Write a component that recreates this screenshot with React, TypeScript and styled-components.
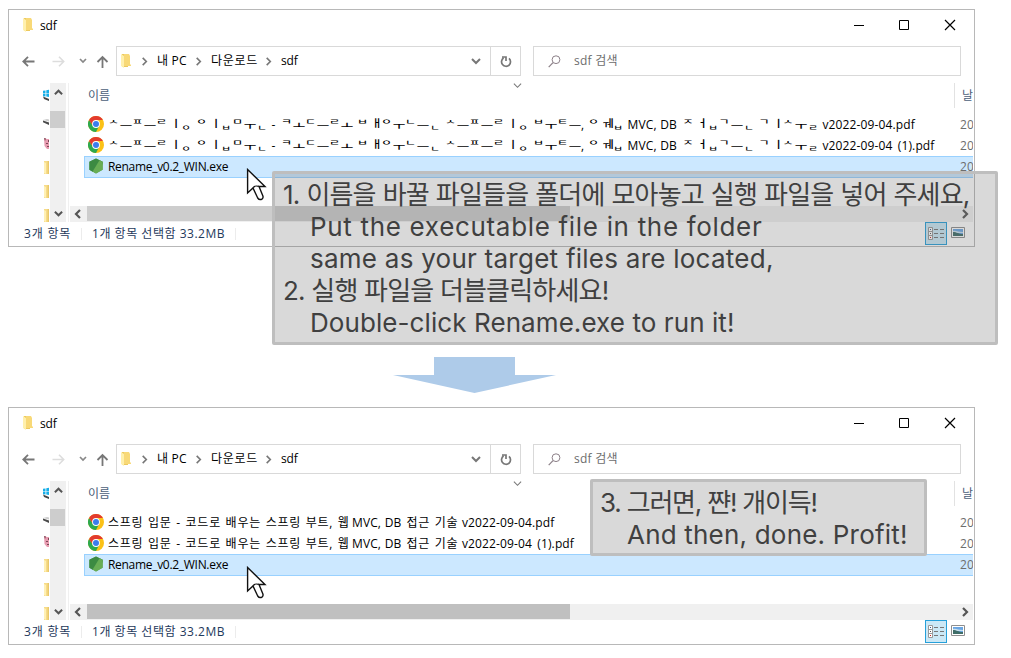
import React from "react";
import styled, { createGlobalStyle } from "styled-components";

const Global = createGlobalStyle`
  *{box-sizing:border-box}
  body{margin:0;background:#fff;overflow:hidden}
`;

const UI = `"Open Sans","Noto Sans CJK KR",sans-serif`;

const Page = styled.main`
  position:relative;width:1011px;height:658px;padding:9px 0 0 8px;
  font-family:${UI};font-size:12px;line-height:20px;color:#000;overflow:hidden;
`;
const Win = styled.section`
  width:967px;height:238px;border:1px solid #b8b8b8;background:#fff;
  display:flex;flex-direction:column;
`;
const TitleBar = styled.header`
  height:36px;flex:none;display:flex;align-items:flex-start;padding:7px 18px 0 14px;
`;
const Title = styled.span`margin:-1px auto 0 6px;line-height:20px;letter-spacing:-.2px;`;
const Controls = styled.div`display:flex;gap:34px;padding-top:2px;svg{display:block}`;
const NavBar = styled.div`
  height:30px;flex:none;display:flex;align-items:center;padding-left:13px;
`;
const NavArrows = styled.div`width:94px;display:flex;align-items:center;`;
const Address = styled.div`
  width:405px;height:30px;border:1px solid #d9d9d9;display:flex;align-items:center;padding-left:4px;
  & > svg:first-child{margin-top:-2px}
`;
const Crumbs = styled.div`
  flex:1;display:flex;align-items:center;margin-left:8px;height:28px;
  svg{flex:none}
`;
const Crumb = styled.span<{ $w: number; $ls?: number }>`
  width:${p => p.$w}px;margin-left:8px;white-space:nowrap;letter-spacing:${p => p.$ls ?? 0}px;
`;
const Refresh = styled.div`
  width:30px;height:28px;border-left:1px solid #d9d9d9;display:flex;align-items:center;justify-content:center;
`;
const Search = styled.div`
  width:428px;height:30px;margin-left:12px;border:1px solid #d9d9d9;display:flex;align-items:center;
  padding-left:14px;color:#6d6d6d;span{margin-left:13px;}
`;
const Body = styled.div`height:146px;flex:none;display:flex;position:relative;padding-top:7px;`;
const Expand = styled.div`position:absolute;left:504px;top:5px;line-height:0;`;
const Tree = styled.div`
  width:41px;height:139px;padding-left:34px;overflow:hidden;display:flex;flex-direction:column;
`;
const TreeItem = styled.div`height:24px;width:7px;flex:none;display:flex;align-items:center;overflow:hidden;svg{flex:none}`;
const VScroll = styled.div`
  width:16px;height:139px;background:#f0f0f0;display:flex;flex-direction:column;
  justify-content:space-between;align-items:center;padding:5px 0 4px;margin-right:2px;
`;
const VThumb = styled.div`width:15px;height:17px;background:#cdcdcd;margin:14px auto auto 0;`;
const Files = styled.div`
  flex:1;min-width:0;border-left:1px solid #f0f0f0;display:flex;flex-direction:column;margin-right:1px;
`;
const Columns = styled.div`height:26px;display:flex;padding-left:19px;color:#4c607a;`;
const NameCol = styled.span`width:866px;line-height:26px;`;
const DateCol = styled.span`
  height:25px;border-left:1px solid #e2e2e2;padding-left:7px;line-height:26px;overflow:hidden;white-space:nowrap;width:19px;
`;
const Rows = styled.div`padding:5px 0 0 15px;height:97px;`;
const Row = styled.div<{ $sel?: boolean }>`
  height:${p => (p.$sel ? 22 : 21)}px;display:flex;align-items:center;padding-left:3px;
  border:1px solid ${p => (p.$sel ? "#99d1ff" : "transparent")};border-right:0;
  background:${p => (p.$sel ? "#cce8ff" : "transparent")};
  svg{flex:none;margin-top:${p => (p.$sel ? -2 : -2)}px}
`;
const FileName = styled.div`width:853px;margin-left:4px;display:flex;white-space:pre;`;
const Run = styled.span<{ $ls?: number; $w?: number; $ws?: number }>`
  flex:none;letter-spacing:${p => p.$ls ?? 0}px;word-spacing:${p => p.$ws ?? 0}px;
  width:${p => (p.$w ? `${p.$w}px` : "auto")};
`;
const DateCell = styled.span`color:#6d6d6d;width:13px;overflow:hidden;`;
const HScroll = styled.div`
  height:16px;margin-left:1px;background:#f0f0f0;display:flex;align-items:center;
`;
const HThumb = styled.div<{ $c: string }>`width:483px;height:15px;background:${p => p.$c};margin:0 auto 1px 5px;`;
const Status = styled.footer`
  flex:1;display:flex;align-items:center;padding-left:15px;color:#1e395b;
`;
const Count = styled.span<{ $w: number; $ls: number }>`
  width:${p => p.$w}px;letter-spacing:${p => p.$ls}px;white-space:nowrap;
`;
const Sep = styled.i`width:1px;height:12px;background:#ececec;`;
const ViewButton = styled.div`
  width:22px;height:23px;margin:-1px 0 0 auto;border:1px solid #26a0da;background:#cbe8f6;
  display:flex;align-items:center;justify-content:center;
`;
const Thumbs = styled.div`margin:-3px 9px 0 4px;line-height:0;`;
const Pointer = styled.svg`position:absolute;left:246px;`;

const Jamo = styled.span<{ $k: "l" | "v" | "r" | "t" }>`
  display:block;flex:none;width:12px;height:20px;line-height:20px;font-weight:500;
  transform:${p =>
    p.$k === "l" ? "translate(0,-2px) scale(1,.54)" :
    p.$k === "t" ? "translate(.5px,4px) scale(.88,.54)" :
    p.$k === "r" ? "translate(2.5px,-1px) scale(1,.85)" : "translate(.5px,.7px) scale(1.14,.8)"};
  transform-origin:6px ${p => (p.$k === "l" || p.$k === "t" ? 7 : 10)}px;
`;

const Down = styled.svg`display:block;margin:110px 0 14px 385px;`;
const Note = styled.div<{ $solid?: boolean }>`
  position:absolute;border:3px solid #bebebe;border-radius:2px;background-clip:padding-box;
  background-color:${p => (p.$solid ? "#d9d9d9" : "rgba(109,109,109,.26)")};
  font-family:Inter,"Noto Sans CJK KR",sans-serif;font-weight:400;font-size:26px;line-height:32px;color:#404040;
  white-space:pre;
`;
const FirstNote = styled(Note)`left:272px;top:171px;width:726px;height:174px;padding:5px 0 0 8px;`;
const LastNote = styled(Note)`left:590px;top:479px;width:337px;height:77px;padding:5px 0 0 7px;`;
const Line = styled.div<{ $ls?: number; $ws?: number; $in?: number }>`
  height:32px;letter-spacing:${p => p.$ls ?? 0}px;word-spacing:${p => p.$ws ?? 0}px;padding-left:${p => p.$in ?? 0}px;
`;

const Folder = () => (
  <svg width="11" height="15" viewBox="0 0 11 15">
    <path d="M1 1h6v13H1z" fill="#ecc95f" />
    <path d="M3 1h5l1 2v8l1 1v1H3z" fill="#f8d978" />
    <path d="M0 1l3 2v12l-3-2z" fill="#fff0ad" />
  </svg>
);
const Chev = ({ d, s = 9, c = "#666", w = 1.8 }: { d: "r" | "d" | "u"; s?: number; c?: string; w?: number }) => {
  const p = { r: "M3 1l4 4-4 4", d: "M1 3l4 4 4-4", u: "M1 7l4-4 4 4" }[d];
  return <svg width={s} height={s} viewBox="0 0 10 10"><path d={p} fill="none" stroke={c} strokeWidth={w} /></svg>;
};
const Arrow = ({ c, up }: { c: string; up?: boolean }) => (
  <svg width="13" height="13" viewBox="0 0 13 13">
    <path d={up ? "M6.5 13V2M1.5 7l5-5 5 5" : "M12.5 6.5H1.5M6 1.8L1.3 6.5 6 11.2"} fill="none" stroke={c} strokeWidth="1.8" />
  </svg>
);
const Chrome = () => (
  <svg width="16" height="16" viewBox="0 0 16 16">
    <circle cx="8" cy="8" r="8" fill="#fbc116" />
    <path d="M1.07 4A8 8 0 0 0 8 16l3.2-6.2L8 8 4.9 9.8z" fill="#2da94f" />
    <path d="M1.07 4A8 8 0 0 1 14.93 4H8L4.9 9.8z" fill="#e33b2e" />
    <circle cx="8" cy="8" r="3.9" fill="#fff" />
    <circle cx="8" cy="8" r="3" fill="#3b7ded" />
  </svg>
);
const Hexagon = () => (
  <svg width="16" height="16" viewBox="0 0 16 16">
    <path d="M8 0.4l6.6 3.4v8L8 15.6 1.4 11.8v-8z" fill="#4f9a47" />
    <path d="M8 .4l6.6 3.4v2.5L4.6 13.7 1.4 11.8v-8z" fill="#3c8a42" />
    <path d="M11.5 2.2l3.1 1.6v8L8 15.6l-3.4-2z" fill="#68ad55" />
  </svg>
);

const Places = () => (
  <Tree>
    <TreeItem>
      <svg width="8" height="12" viewBox="0 0 8 12">
        <path d="M0 1.8l2.5-.4v3H0zM3.3 1.2L6 .8v3.6H3.3zM0 5h2.5v2.6L0 7.3zM3.3 5H6v3l-2.7-.4z" fill="#16aee8" />
        <path d="M0 7.4l6 2.6v2L1 10z" fill="#444" />
      </svg>
    </TreeItem>
    <TreeItem>
      <svg width="8" height="12" viewBox="0 0 8 12">
        <path d="M0 7l4-1 2 .6v2z" fill="#ccc" /><path d="M0 7.4l6 2.2V12L0 9.2z" fill="#4b4b4b" />
      </svg>
    </TreeItem>
    <TreeItem>
      <svg width="8" height="13" viewBox="0 0 8 13">
        <path d="M1 1l3 1 2 0v10H4L1.5 9z" fill="#e79bb0" /><path d="M1 1l2 .5L2 4zM3 6h2v1H3zM4 9h2v1H4zM5 3h1v2H5z" fill="#7d4856" />
      </svg>
    </TreeItem>
    {[0, 1, 2].map(i => (
      <TreeItem key={i}>
        <svg width="8" height="13" viewBox="0 0 8 13"><path d="M1 0h5v13H1z" fill="#f7dc89" /><path d="M1 1l2 1v11l-2-1z" fill="#fff0b5" /><path d="M4.6 0H6v13H4.6z" fill="#e9c86c" /></svg>
      </TreeItem>
    ))}
  </Tree>
);

type Kind = "l" | "v" | "r" | "t";
type Piece = { jamo: string; kinds: string } | { text: string; w: number };
const SPLIT: Piece[] = [
  { jamo: "ㅅㅡㅍㅡㄹㅣㅇ", kinds: "lvlvlrt" }, { text: " ", w: 4 },
  { jamo: "ㅇㅣㅂㅁㅜㄴ", kinds: "lrtlvt" }, { text: " - ", w: 13 },
  { jamo: "ㅋㅗㄷㅡㄹㅗ", kinds: "lvlvlv" }, { text: " ", w: 4 },
  { jamo: "ㅂㅐㅇㅜㄴㅡㄴ", kinds: "lrlvlvt" }, { text: " ", w: 4 },
  { jamo: "ㅅㅡㅍㅡㄹㅣㅇ", kinds: "lvlvlrt" }, { text: " ", w: 4 },
  { jamo: "ㅂㅜㅌㅡ", kinds: "lvlv" }, { text: ", ", w: 7 },
  { jamo: "ㅇㅞㅂ", kinds: "lrt" }, { text: " MVC, DB ", w: 58.5 },
  { jamo: "ㅈㅓㅂㄱㅡㄴ", kinds: "lrtlvt" }, { text: " ", w: 4 },
  { jamo: "ㄱㅣㅅㅜㄹ", kinds: "lrlvt" }, { text: " ", w: 4 },
];
const SplitName = ({ tail }: { tail: string }) => (
  <FileName>
    {SPLIT.map((s, i) => "text" in s
      ? <Run key={i} $w={s.w} $ls={0.1} $ws={0.4}>{s.text}</Run>
      : [...s.jamo].map((ch, j) => <Jamo key={i + "-" + j} $k={s.kinds[j] as Kind}>{ch}</Jamo>))}
    <Run $ls={0.13} $ws={2}>{tail}</Run>
  </FileName>
);
const JoinedName = ({ tail }: { tail: string }) => (
  <FileName>
    <Run $ls={0.75} $ws={0.8} $w={244}>스프링 입문 - 코드로 배우는 스프링 부트, 웹 </Run>
    <Run $ls={0.1} $ws={0.4} $w={54.5}>MVC, DB </Run>
    <Run $ls={0.75} $ws={0.8} $w={55.5}>접근 기술 </Run>
    <Run $ls={0.13} $ws={2}>{tail}</Run>
  </FileName>
);

const Explorer = ({ split }: { split?: boolean }) => {
  const Name = split ? SplitName : JoinedName;
  return (
    <Win>
      <TitleBar>
        <Folder /><Title>sdf</Title>
        <Controls>
          <svg width="11" height="12"><path d="M0 6.5h10" stroke="#000" /></svg>
          <svg width="11" height="12"><path d="M.5 1.5h9v9h-9z" fill="none" stroke="#000" /></svg>
          <svg width="12" height="12"><path d="M1 1l10 10M11 1L1 11" fill="none" stroke="#000" strokeWidth="1.2" /></svg>
        </Controls>
      </TitleBar>
      <NavBar>
        <NavArrows>
          <Arrow c="#777" />
          <svg width="13" height="13" viewBox="0 0 13 13" style={{ marginLeft: 17 }}><path d="M.5 6.5h11M7 1.8l4.7 4.7L7 11.2" fill="none" stroke="#ddd" strokeWidth="1.6" /></svg>
          <svg width="8" height="6" viewBox="0 0 8 6" style={{ marginLeft: 14, marginRight: 9 }}><path d="M1 1l3 3 3-3" fill="none" stroke="#888" strokeWidth="1.7" /></svg>
          <Arrow c="#777" up />
        </NavArrows>
        <Address>
          <Folder />
          <Crumbs>
            <Chev d="r" c="#777" /><Crumb $w={37} $ls={0.2}>내 PC</Crumb>
            <Chev d="r" c="#777" /><Crumb $w={53} $ls={0.7}>다운로드</Crumb>
            <Chev d="r" c="#777" /><Crumb $w={30} $ls={-0.2}>sdf</Crumb>
          </Crumbs>
          <svg width="10" height="8" viewBox="0 0 10 8" style={{ marginRight: 9 }}><path d="M1 2l4 4 4-4" fill="none" stroke="#777" strokeWidth="2" /></svg>
          <Refresh>
            <svg width="12" height="13" viewBox="0 0 12 13"><path d="M3.6 3A4.5 4.5 0 1 0 9 3.4M2 2h4v4" fill="none" stroke="#777" strokeWidth="1.7" /></svg>
          </Refresh>
        </Address>
        <Search>
          <svg width="13" height="13" viewBox="0 0 13 13"><circle cx="8" cy="4.7" r="3.9" fill="none" stroke="#8c8088" /><path d="M5 7.6L.7 12.2" stroke="#8c8088" strokeWidth="1.2" /></svg>
          <Run $ls={0.25}>sdf 검색</Run>
        </Search>
      </NavBar>
      <Body>
        <Expand><Chev d="d" w={1.2} c="#777" /></Expand>
        <Places />
        <VScroll>
          <Chev d="u" w={2.2} c="#555" /><VThumb /><Chev d="d" w={2.2} c="#555" />
        </VScroll>
        <Files>
          <Columns><NameCol>이름</NameCol><DateCol>날</DateCol></Columns>
          <Rows>
            <Row><Chrome /><Name tail="v2022-09-04.pdf" /><DateCell>20</DateCell></Row>
            <Row><Chrome /><Name tail="v2022-09-04 (1).pdf" /><DateCell>20</DateCell></Row>
            <Row $sel><Hexagon /><FileName><Run $ls={-0.3}>Rename_v0.2_WIN.exe</Run></FileName><DateCell>20</DateCell></Row>
          </Rows>
          <HScroll>
            <svg width="12" height="10" viewBox="0 0 12 10"><path d="M10 1L6 5l4 4" fill="none" stroke="#555" strokeWidth="2.2" /></svg>
            <HThumb $c={split ? "#cdcdcd" : "#c0c0c0"} />
            <svg width="13" height="10" viewBox="0 0 13 10"><path d="M3 1l4 4-4 4" fill="none" stroke="#555" strokeWidth="2.2" /></svg>
          </HScroll>
        </Files>
      </Body>
      <Status>
        <Count $w={57} $ls={0.8}>3개 항목</Count><Sep />
        <Count $w={153} $ls={0.52} style={{ marginLeft: 10 }}>1개 항목 선택함 33.2MB</Count><Sep style={{ marginLeft: -10 }} />
        <ViewButton>
          <svg width="16" height="13" viewBox="0 0 16 13">
            <path d="M.5.5h4v12h-4zM.5 4.5h4M.5 8.5h4" fill="#fff" stroke="#9a9a9a" />
            <path d="M2 2h1v1H2z" fill="#358" /><path d="M2 6h1v1H2z" fill="#555" /><path d="M2 10h1v1H2z" fill="#c22" />
            <path d="M6 2.5h4M12 2.5h4M6 6.5h4M12 6.5h4M6 10.5h4M12 10.5h4" stroke="#777" />
          </svg>
        </ViewButton>
        <Thumbs>
          <svg width="14" height="11" viewBox="0 0 14 11">
            <path d="M.5.5h13v10H.5z" fill="#fff" stroke="#8e8e8e" /><path d="M2 2h10v7H2z" fill="#6aa6e3" />
            <path d="M2 4c3-1 5 1 10 1v1H2z" fill="#c9e1f0" /><path d="M2 5c4 0 5 2 10 2v2H2z" fill="#3f6d68" />
          </svg>
        </Thumbs>
      </Status>
    </Win>
  );
};

const Cursor = ({ y }: { y: number }) => (
  <Pointer width="22" height="34" viewBox="0 0 22 34" style={{ top: y }}>
    <path d="M1.6 1.5v23.500l5.400-5 4.700 10q1.800 2.600 4.600.8 1.200-1.200.5-3L13 18.500h6z" fill="#fff" stroke="#111" strokeWidth="1.4" />
    <path d="M7.200 19.800q1-2.600 5.600-1.400" fill="none" stroke="#111" strokeWidth="1.2" />
  </Pointer>
);

export default function App() {
  return (
    <Page>
      <Global />
      <Explorer split />
      <Down width="163" height="36" viewBox="0 0 163 36"><path d="M41 0h81v18h41l-81.5 18L0 18h41z" fill="#aecbe9" /></Down>
      <Explorer />
      <Cursor y={168} />
      <Cursor y={566} />
      <FirstNote>
        <Line $ls={-0.8} $ws={0.4}>1. 이름을 바꿀 파일들을 폴더에 모아놓고 실행 파일을 넣어 주세요,</Line>
        <Line $in={27} $ls={0.68}>Put the executable file in the folder</Line>
        <Line $in={27} $ls={0.25}>same as your target files are located,</Line>
        <Line $ls={-0.8}>2. 실행 파일을 더블클릭하세요!</Line>
        <Line $in={27} $ls={0.08}>Double-click Rename.exe to run it!</Line>
      </FirstNote>
      <LastNote $solid>
        <Line $ls={-1.2}>3. 그러면, 쨘! 개이득!</Line>
        <Line $in={27} $ls={0.2}>And then, done. Profit!</Line>
      </LastNote>
    </Page>
  );
}
